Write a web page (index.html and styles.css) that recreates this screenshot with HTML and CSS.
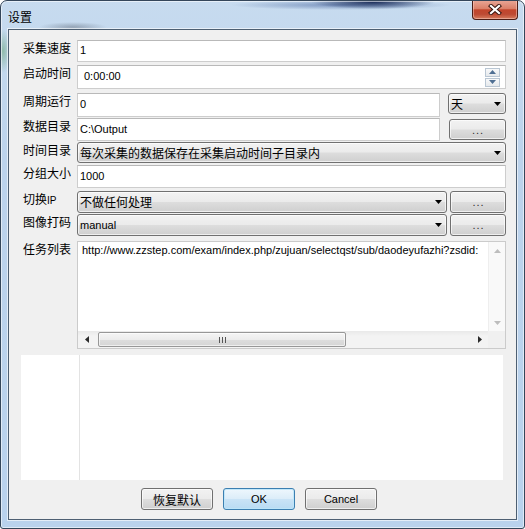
FILE: index.html
```html
<!DOCTYPE html>
<html lang="zh-CN">
<head>
<meta charset="utf-8">
<title>设置</title>
<link rel="stylesheet" href="styles.css">
</head>
<body>
<div class="window">
  <div class="titlebar">
    <span class="title">设置</span>
    <div class="close">
      <svg width="14" height="11" viewBox="0 0 14 11">
        <path d="M3 2 L11 9 M11 2 L3 9" stroke="#3a1812" stroke-width="4.2" stroke-linecap="square" fill="none"/>
        <path d="M3 2 L11 9 M11 2 L3 9" stroke="#ffffff" stroke-width="2.2" stroke-linecap="square" fill="none"/>
      </svg>
    </div>
  </div>
  <div class="client">
    <div class="row r1">
      <span class="lbl">采集速度</span>
      <div class="edit grow">1</div>
    </div>
    <div class="row r2">
      <span class="lbl">启动时间</span>
      <div class="edit grow spin-edit">
        <span class="val">0:00:00</span>
        <div class="spin">
          <div class="spin-btn"><svg width="7" height="4" viewBox="0 0 7 4"><polygon points="0,4 7,4 3.5,0" fill="#4f6f93"/></svg></div>
          <div class="spin-btn"><svg width="7" height="4" viewBox="0 0 7 4"><polygon points="0,0 7,0 3.5,4" fill="#4f6f93"/></svg></div>
        </div>
      </div>
    </div>
    <div class="row r3">
      <span class="lbl">周期运行</span>
      <div class="edit grow">0</div>
      <div class="combo unit">
        <span class="ctext cjk">天</span>
        <svg class="arrow" width="7" height="4" viewBox="0 0 7 4"><polygon points="0,0 7,0 3.5,4" fill="#000"/></svg>
      </div>
    </div>
    <div class="row r4">
      <span class="lbl">数据目录</span>
      <div class="edit grow">C:\Output</div>
      <div class="btn dots browse-a">...</div>
    </div>
    <div class="row r5">
      <span class="lbl">时间目录</span>
      <div class="combo grow">
        <span class="ctext cjk">每次采集的数据保存在采集启动时间子目录内</span>
        <svg class="arrow" width="7" height="4" viewBox="0 0 7 4"><polygon points="0,0 7,0 3.5,4" fill="#000"/></svg>
      </div>
    </div>
    <div class="row r6">
      <span class="lbl">分组大小</span>
      <div class="edit grow">1000</div>
    </div>
    <div class="row r7">
      <span class="lbl">切换<span class="lat">IP</span></span>
      <div class="combo grow">
        <span class="ctext cjk">不做任何处理</span>
        <svg class="arrow" width="7" height="4" viewBox="0 0 7 4"><polygon points="0,0 7,0 3.5,4" fill="#000"/></svg>
      </div>
      <div class="btn dots browse-b">...</div>
    </div>
    <div class="row r8">
      <span class="lbl">图像打码</span>
      <div class="combo grow">
        <span class="ctext">manual</span>
        <svg class="arrow" width="7" height="4" viewBox="0 0 7 4"><polygon points="0,0 7,0 3.5,4" fill="#000"/></svg>
      </div>
      <div class="btn dots browse-b">...</div>
    </div>
    <div class="row r9">
      <span class="lbl">任务列表</span>
      <div class="memo grow">
        <div class="memo-text">http://www.zzstep.com/exam/index.php/zujuan/selectqst/sub/daodeyufazhi?zsdid:</div>
        <div class="vscroll">
          <div class="sb-btn"><svg width="7" height="4" viewBox="0 0 7 4"><polygon points="0,4 7,4 3.5,0" fill="#bdbdbd"/></svg></div>
          <div class="sb-btn"><svg width="7" height="4" viewBox="0 0 7 4"><polygon points="0,0 7,0 3.5,4" fill="#bdbdbd"/></svg></div>
        </div>
        <div class="hscroll">
          <div class="sb-hbtn"><svg width="4" height="7" viewBox="0 0 4 7"><polygon points="4,0 4,7 0,3.5" fill="#2b2b2b"/></svg></div>
          <div class="thumb"><span class="grip"></span></div>
          <div class="sb-hbtn end"><svg width="4" height="7" viewBox="0 0 4 7"><polygon points="0,0 0,7 4,3.5" fill="#2b2b2b"/></svg></div>
        </div>
        <div class="corner"></div>
      </div>
    </div>
    <div class="pane">
      <div class="pane-left"></div>
      <div class="pane-right"></div>
    </div>
    <div class="actions">
      <div class="pbtn cjk">恢复默认</div>
      <div class="pbtn default">OK</div>
      <div class="pbtn">Cancel</div>
    </div>
  </div>
</div>
</body>
</html>
```
FILE: styles.css
```css
html, body {
  margin: 0;
  padding: 0;
  background: #ffffff;
}

.window {
  width: 525px;
  height: 529px;
  box-sizing: border-box;
  border: 1px solid #34465a;
  border-radius: 7px 7px 3px 3px;
  overflow: hidden;
  display: flex;
  flex-direction: column;
  box-shadow: inset 0 0 0 1px rgba(255, 255, 255, 0.55);
  background:
    radial-gradient(ellipse 62px 7px at 372px 1px, rgba(18, 36, 82, 0.95), rgba(18, 36, 82, 0) 100%),
    radial-gradient(ellipse 110px 5px at 340px 4px, rgba(60, 90, 150, 0.55), rgba(60, 90, 150, 0) 100%),
    radial-gradient(ellipse 34px 5px at 72px 26px, rgba(90, 100, 115, 0.45), rgba(90, 100, 115, 0) 100%),
    radial-gradient(ellipse 8px 22px at 2px 50px, rgba(80, 150, 90, 0.45), rgba(80, 150, 90, 0) 100%),
    linear-gradient(180deg, #c7dbef 0%, #bcd3ec 30%, #b9d2ed 100%);
}

.titlebar {
  height: 28px;
  flex: none;
  display: flex;
  align-items: flex-start;
}

.title {
  margin: 8px 0 0 7px;
  font-family: "Noto Sans CJK SC", "Noto Sans", sans-serif;
  font-size: 12px;
  line-height: 16px;
  color: #000;
}

.close {
  margin: -1px 6px 0 auto;
  width: 46px;
  height: 20px;
  box-sizing: border-box;
  border: 1px solid #4b1d16;
  border-top: none;
  border-radius: 0 0 4px 4px;
  background: linear-gradient(180deg, #e9a898 0%, #da8069 45%, #c2452c 52%, #bd4a33 75%, #d67c5e 100%);
  box-shadow: inset 0 0 0 1px rgba(255, 220, 210, 0.45);
  display: flex;
  align-items: center;
  justify-content: center;
}

.client {
  margin: 0 7px;
  height: 491px;
  box-sizing: border-box;
  border: 1px solid #4d5f72;
  background: #f0f0f0;
  padding: 10px 10px 0 14px;
  box-shadow: 0 0 0 1px rgba(255, 255, 255, 0.6);
}

.row {
  display: flex;
  align-items: flex-start;
}

.r1 { height: 22px; }
.r2 { height: 24px; margin-top: 3px; }
.r3 { height: 24px; margin-top: 4px; }
.r4 { height: 23px; margin-top: 1px; }
.r5 { height: 21px; margin-top: 1px; }
.r6 { height: 23px; margin-top: 2px; }
.r7 { height: 22px; margin-top: 3px; }
.r8 { height: 22px; margin-top: 1px; }
.r9 { height: 108px; margin-top: 5px; }

.lbl {
  width: 54px;
  flex: none;
  font-family: "Noto Sans CJK SC", "Noto Sans", sans-serif;
  font-size: 12px;
  line-height: 16px;
  color: #000;
  white-space: nowrap;
}

.lat {
  font-family: "Liberation Sans", sans-serif;
  font-size: 10px;
}

.grow {
  flex: 1;
  min-width: 0;
}

.edit {
  height: 100%;
  box-sizing: border-box;
  border: 1px solid #cdcdcd;
  border-top-color: #b9b9b9;
  background: #ffffff;
  padding: 0 3px 2px 2px;
  display: flex;
  align-items: center;
  font-family: "Liberation Sans", "Noto Sans", sans-serif;
  font-size: 11px;
  color: #000;
  white-space: nowrap;
}

.spin-edit .val {
  padding-left: 4px;
}

.spin {
  margin-left: auto;
  margin-right: 2px;
  margin-bottom: -2px;
  width: 15px;
  display: flex;
  flex-direction: column;
  gap: 1px;
}

.spin-btn {
  height: 9px;
  box-sizing: border-box;
  border: 1px solid #b9c6d3;
  background: linear-gradient(180deg, #f8f9fa 0%, #e6e9ec 100%);
  display: flex;
  align-items: center;
  justify-content: center;
}

.combo,
.btn,
.pbtn {
  box-sizing: border-box;
  border: 1px solid #707070;
  border-radius: 3px;
  background: linear-gradient(180deg, #f2f2f2 0%, #ebebeb 48%, #dddddd 52%, #cfcfcf 100%);
  box-shadow: inset 0 0 0 1px rgba(255, 255, 255, 0.65);
  color: #000;
}

.combo {
  height: 21px;
  display: flex;
  align-items: center;
  padding: 0 4px 0 2px;
  font-family: "Liberation Sans", "Noto Sans", sans-serif;
  font-size: 11px;
  white-space: nowrap;
  overflow: hidden;
}

.r7 .combo,
.r8 .combo {
  height: 22px;
}

.cjk {
  font-family: "Noto Sans CJK SC", "Noto Sans", sans-serif;
  font-size: 12px;
}

.ctext {
  line-height: 16px;
}

.arrow {
  margin-left: auto;
  flex: none;
}

.unit {
  width: 58px;
  margin-left: 8px;
  flex: none;
}

.btn {
  flex: none;
  display: flex;
  align-items: center;
  justify-content: center;
  font-family: "Liberation Sans", sans-serif;
  font-size: 11px;
}

.dots {
  color: #2e2e2e;
  letter-spacing: 1px;
  padding-left: 1px;
}

.browse-a {
  width: 57px;
  height: 21px;
  margin: 1px 0 0 9px;
}

.browse-b {
  width: 56px;
  height: 22px;
  margin-left: 3px;
}

.memo {
  height: 108px;
  box-sizing: border-box;
  border: 1px solid #cbcbcb;
  background: #ffffff;
  display: grid;
  grid-template-columns: 1fr 17px;
  grid-template-rows: 1fr 17px;
}

.memo-text {
  padding: 1px 0 0 4px;
  font-family: "Liberation Sans", "Noto Sans", sans-serif;
  font-size: 11px;
  line-height: 14px;
  white-space: nowrap;
  color: #000;
}

.vscroll {
  background: #f9f9f9;
  border-left: 1px solid #eeeeee;
  display: flex;
  flex-direction: column;
  justify-content: space-between;
}

.sb-btn {
  height: 17px;
  display: flex;
  align-items: center;
  justify-content: center;
}

.hscroll {
  background: linear-gradient(180deg, #e9e9e9 0%, #f3f3f3 30%, #f3f3f3 100%);
  display: flex;
  align-items: stretch;
}

.sb-hbtn {
  width: 17px;
  flex: none;
  display: flex;
  align-items: center;
  justify-content: center;
}

.sb-hbtn.end {
  margin-left: auto;
}

.thumb {
  width: 248px;
  margin: 1px 0 1px 3px;
  box-sizing: border-box;
  border: 1px solid #979797;
  border-radius: 2px;
  background: linear-gradient(180deg, #f5f5f5 0%, #ececec 50%, #dedede 51%, #d5d5d5 100%);
  box-shadow: inset 0 0 0 1px rgba(255, 255, 255, 0.6);
  display: flex;
  align-items: center;
  justify-content: center;
}

.grip {
  width: 7px;
  height: 6px;
  background: linear-gradient(90deg, #555 0 1px, transparent 1px 3px, #555 3px 4px, transparent 4px 6px, #555 6px 7px);
}

.corner {
  background: #f0f0f0;
}

.pane {
  margin: 6px 3px 0 -2px;
  height: 125px;
  background: #ffffff;
  display: flex;
}

.pane-left {
  width: 58px;
  border-right: 1px solid #e3e3e3;
}

.pane-right {
  flex: 1;
}

.actions {
  display: flex;
  gap: 10px;
  margin-top: 8px;
  padding-left: 118px;
}

.pbtn {
  width: 72px;
  height: 22px;
  display: flex;
  align-items: center;
  justify-content: center;
  font-family: "Liberation Sans", "Noto Sans CJK SC", sans-serif;
  font-size: 11px;
}

.pbtn.cjk {
  font-family: "Noto Sans CJK SC", "Noto Sans", sans-serif;
  font-size: 12px;
}

.pbtn.default {
  border-color: #3c7fb1;
  background: linear-gradient(180deg, #eef7fd 0%, #dcedf9 48%, #c9e3f6 52%, #b9dbf3 100%);
  box-shadow: inset 0 0 0 1px rgba(190, 230, 250, 0.9);
}
```
